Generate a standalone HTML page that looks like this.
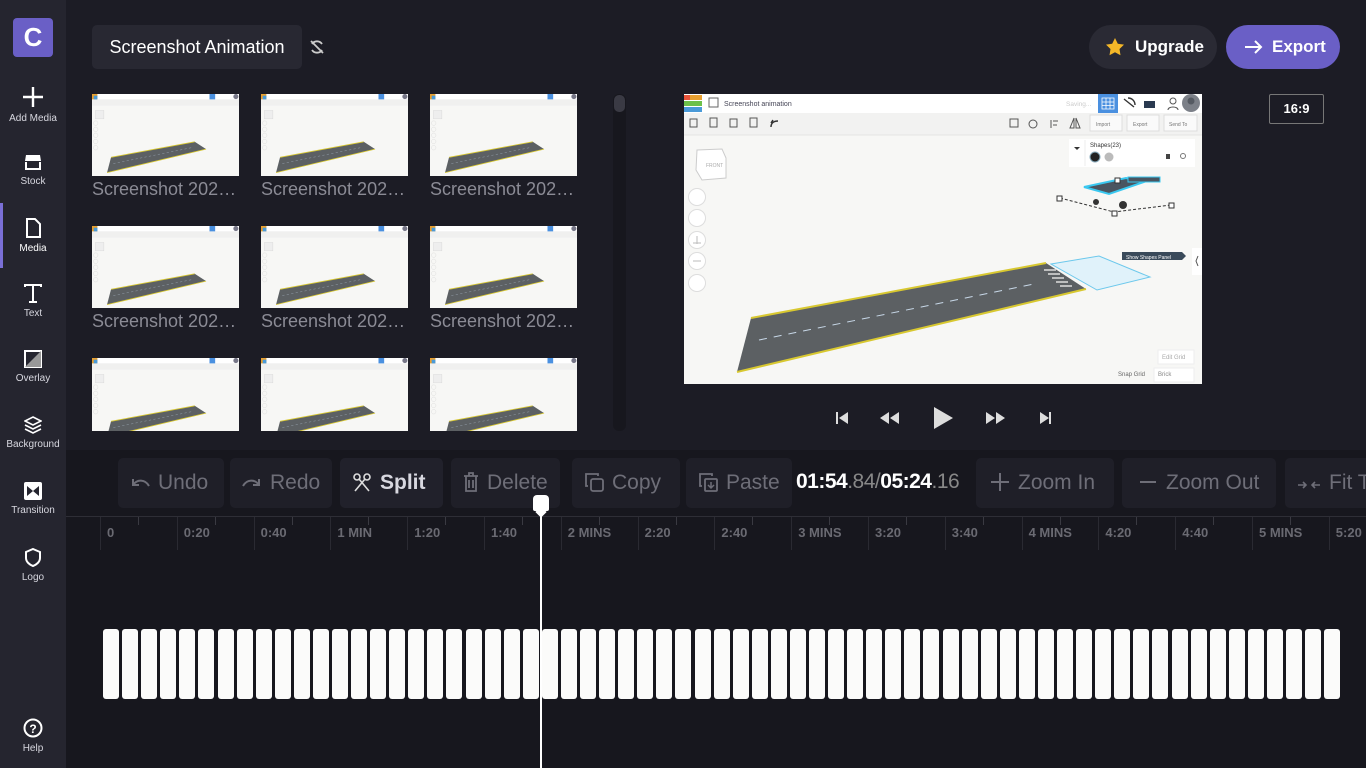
<!DOCTYPE html>
<html><head><meta charset="utf-8">
<style>
*{margin:0;padding:0;box-sizing:border-box}
body{width:1366px;height:768px;overflow:hidden;background:#1c1c25;font-family:"Liberation Sans",sans-serif;position:relative;color:#fff}
.abs{position:absolute}
#side{left:0;top:0;width:66px;height:768px;background:#25252f}
.nav{position:absolute;left:0;width:66px;text-align:center;font-size:10px;color:#d8d8e0}
.nav svg{display:block;margin:0 auto 5px}
.thumb{position:absolute;width:147px;height:82px;background:#f6f6f4;overflow:hidden}
.lbl{position:absolute;font-size:18px;color:#8b8b95;white-space:nowrap;width:147px;overflow:hidden;text-overflow:ellipsis}
.btn{position:absolute;top:458px;height:50px;background:#1f1f28;border-radius:5px;color:#6e6e78;font-size:21px;line-height:50px;padding-left:12px;white-space:nowrap;overflow:hidden}
.btn svg{vertical-align:-3px;margin-right:8px}
.tick{position:absolute;top:517px;font-size:13px;font-weight:bold;color:#6a6a72}
.clip{position:absolute;top:629px;width:16px;height:70px;background:#fbfbfa;border-radius:3px}
</style></head><body>
<div id="side" class="abs">
 <div class="abs" style="left:13px;top:18px;width:40px;height:39px;background:#6a5fc6;border-radius:4px;color:#fff;font-weight:bold;font-size:26px;text-align:center;line-height:39px">C</div>
 <div class="nav" style="top:86px"><svg width="22" height="22"><path d="M11 1v20M1 11h20" stroke="#fff" stroke-width="2.4"/></svg>Add Media</div>
 <div class="nav" style="top:153px"><svg width="18" height="18"><path d="M2 2h14l1 6H1z" fill="#fff"/><path d="M2 9v7h14V9" fill="none" stroke="#fff" stroke-width="2"/></svg>Stock</div>
 <div class="abs" style="left:0;top:203px;width:3px;height:65px;background:#7a6fd6"></div>
 <div class="nav" style="top:218px;color:#fff"><svg width="16" height="20"><path d="M2 1h8l5 5v13H2z" fill="none" stroke="#fff" stroke-width="2"/></svg>Media</div>
 <div class="nav" style="top:284px"><svg width="18" height="19"><path d="M1 3V1h16v2M9 1v17M5 18h8" fill="none" stroke="#fff" stroke-width="2"/></svg>Text</div>
 <div class="nav" style="top:350px"><svg width="18" height="18"><rect x="1" y="1" width="16" height="16" fill="none" stroke="#fff" stroke-width="2"/><path d="M17 1L1 17h16z" fill="#999"/></svg>Overlay</div>
 <div class="nav" style="top:416px"><svg width="18" height="18"><path d="M9 1l8 4-8 4-8-4zM1 9l8 4 8-4M1 13l8 4 8-4" fill="none" stroke="#fff" stroke-width="1.6"/></svg>Background</div>
 <div class="nav" style="top:482px"><svg width="18" height="18"><rect width="18" height="18" rx="2" fill="#fff"/><path d="M3 4l6 5-6 5zM15 4l-6 5 6 5z" fill="#25252f"/></svg>Transition</div>
 <div class="nav" style="top:548px"><svg width="16" height="19"><path d="M8 1l7 3v6c0 4-4 7-7 8-3-1-7-4-7-8V4z" fill="none" stroke="#fff" stroke-width="2"/></svg>Logo</div>
 <div class="nav" style="top:718px"><svg width="20" height="20"><circle cx="10" cy="10" r="8.5" fill="none" stroke="#fff" stroke-width="2"/><text x="10" y="15" font-size="12" font-weight="bold" text-anchor="middle" fill="#fff" font-family="Liberation Sans">?</text></svg>Help</div>
</div>

<div class="abs" style="left:92px;top:25px;width:210px;height:44px;background:#282832;border-radius:5px;font-size:18px;line-height:44px;text-align:center;color:#fff">Screenshot Animation</div>
<svg class="abs" style="left:309px;top:39px" width="16" height="16"><path d="M3 5a6 6 0 0 1 10 0M13 11a6 6 0 0 1-10 0M2 2l12 12" stroke="#ccc" stroke-width="1.8" fill="none"/></svg>

<div class="abs" style="left:1089px;top:25px;width:128px;height:44px;background:#2a2a34;border-radius:22px;font-size:17px;font-weight:bold;line-height:44px;padding-left:46px">Upgrade</div>
<svg class="abs" style="left:1105px;top:37px" width="20" height="19"><path d="M10 1l2.8 5.7 6.2.9-4.5 4.4 1 6.2L10 15.3 4.5 18.2l1-6.2L1 7.6l6.2-.9z" fill="#f4b728"/></svg>
<div class="abs" style="left:1226px;top:25px;width:114px;height:44px;background:#6a5fc6;border-radius:22px;font-size:17px;font-weight:bold;line-height:44px;padding-left:46px">Export</div>
<svg class="abs" style="left:1244px;top:40px" width="20" height="14"><path d="M1 7h16M11 1l6 6-6 6" stroke="#fff" stroke-width="2" fill="none"/></svg>
<div class="abs" style="left:1269px;top:94px;width:55px;height:30px;border:1px solid #777;border-radius:2px;font-size:13px;line-height:28px;text-align:center;font-weight:bold">16:9</div>

<svg width="0" height="0" style="position:absolute">
<defs>
<symbol id="shot" viewBox="0 0 518 290" preserveAspectRatio="none">
 <rect width="518" height="290" fill="#f7f7f5"/>
 <rect width="518" height="19" fill="#fff"/>
 <rect y="19" width="518" height="22" fill="#f0f0ef"/>
 <rect x="0" y="0" width="19" height="19" fill="#e8a030"/><rect x="6" y="6" width="13" height="13" fill="#4a9ad8"/>
 <rect x="414" y="0" width="20" height="19" fill="#4a90e0"/>
 <circle cx="507" cy="9" r="9" fill="#778"/>
 <rect x="12" y="58" width="30" height="30" fill="#eee" stroke="#ccc"/>
 <circle cx="13" cy="103" r="8" fill="none" stroke="#ccc"/><circle cx="13" cy="125" r="8" fill="none" stroke="#ccc"/><circle cx="13" cy="146" r="8" fill="none" stroke="#ccc"/><circle cx="13" cy="168" r="8" fill="none" stroke="#ccc"/><circle cx="13" cy="190" r="8" fill="none" stroke="#ccc"/>
 <polygon points="67,224 362,169 402,195 53,278" fill="#5c6063"/>
 <path d="M67,224 L362,169 M53,278 L402,195" stroke="#d8c830" stroke-width="3"/>
 <path d="M75,246 L350,190" stroke="#bcd" stroke-width="1" stroke-dasharray="8,8"/>
</symbol>
</defs></svg>

<div id="media"></div>
<div class="abs" style="left:613px;top:94px;width:13px;height:337px;background:#17171e;border-radius:6px"></div>
<div class="abs" style="left:614px;top:95px;width:11px;height:17px;background:#3a3a44;border-radius:5px"></div>

<svg class="abs" style="left:684px;top:94px" width="518" height="290" viewBox="0 0 518 290">
 <rect width="518" height="290" fill="#f7f7f5"/>
 <rect width="518" height="19" fill="#fff"/>
 <rect y="19" width="518" height="22" fill="#f2f2f1"/>
 <line x1="0" y1="41" x2="518" y2="41" stroke="#e4e4e4"/>
 <rect x="0" y="1" width="6" height="5" fill="#e8543a"/><rect x="6" y="1" width="6" height="5" fill="#e8a030"/><rect x="12" y="1" width="6" height="5" fill="#e8a030"/>
 <rect x="0" y="7" width="6" height="5" fill="#6cc04a"/><rect x="6" y="7" width="6" height="5" fill="#6cc04a"/><rect x="12" y="7" width="6" height="5" fill="#6cc04a"/>
 <rect x="0" y="13" width="6" height="5" fill="#4a9ad8"/><rect x="6" y="13" width="6" height="5" fill="#4a9ad8"/><rect x="12" y="13" width="6" height="5" fill="#4a9ad8"/>
 <rect x="25" y="4" width="9" height="9" fill="none" stroke="#666"/>
 <text x="40" y="12" font-size="7" fill="#445" font-family="Liberation Sans">Screenshot animation</text>
 <text x="382" y="12" font-size="6.5" fill="#ccc" font-family="Liberation Sans">Saving...</text>
 <rect x="414" y="0" width="20" height="19" fill="#4a90e0"/>
 <path d="M418 4h12v11h-12zM418 8h12M418 11.5h12M422 4v11M426 4v11" stroke="#fff" stroke-width=".8" fill="none"/>
 <path d="M440 5l10 8M444 4c4 0 7 3 7 7" stroke="#333" stroke-width="1.4" fill="none"/>
 <rect x="460" y="7" width="11" height="7" fill="#2a3a50"/>
 <circle cx="489" cy="7" r="3" fill="none" stroke="#555"/><path d="M484 16c0-4 10-4 10 0" stroke="#555" fill="none"/>
 <circle cx="507" cy="9" r="9" fill="#7c8088"/><circle cx="507" cy="7" r="3.5" fill="#555a62"/>
 <g fill="none" stroke="#555" stroke-width="1"><rect x="6" y="25" width="7" height="8"/><rect x="26" y="24" width="7" height="9"/><rect x="46" y="25" width="7" height="8"/><rect x="66" y="24" width="7" height="9"/></g>
 <path d="M87 33c0-4 3-6 7-6M87 29l2-3" stroke="#333" stroke-width="1.5" fill="none"/>
 <g fill="none" stroke="#555"><rect x="326" y="25" width="8" height="8"/><circle cx="349" cy="30" r="4"/><path d="M367 26v8M369 27h5M369 31h4"/><path d="M390 24l-4 10h4zM392 24l4 10h-4z"/></g>
 <g fill="#fafafa" stroke="#ddd"><rect x="406" y="21" width="32" height="16"/><rect x="443" y="21" width="32" height="16"/><rect x="480" y="21" width="33" height="16"/></g>
 <text x="412" y="32" font-size="5" fill="#777" font-family="Liberation Sans">Import</text><text x="449" y="32" font-size="5" fill="#777" font-family="Liberation Sans">Export</text><text x="485" y="32" font-size="5" fill="#777" font-family="Liberation Sans">Send To</text>
 <polygon points="13,56 38,55 42,64 42,84 18,86 12,76" fill="#fff" stroke="#ccc"/>
 <text x="22" y="73" font-size="5" fill="#aaa" font-family="Liberation Sans">FRONT</text>
 <g fill="#fff" stroke="#ddd"><circle cx="13" cy="103" r="8.5"/><circle cx="13" cy="124" r="8.5"/><circle cx="13" cy="146" r="8.5"/><circle cx="13" cy="167" r="8.5"/><circle cx="13" cy="189" r="8.5"/></g>
 <g stroke="#bbb" fill="none"><path d="M9 149h8M13 142v8"/><path d="M9 167h8"/></g>
 <rect x="385" y="45" width="126" height="28" fill="#fff"/>
 <line x1="401" y1="46" x2="401" y2="72" stroke="#eee"/>
 <path d="M390 53h6l-3 3z" fill="#333"/>
 <text x="406" y="53" font-size="6" fill="#333" font-family="Liberation Sans">Shapes(23)</text>
 <circle cx="411" cy="63" r="5" fill="#222" stroke="#8ab"/><circle cx="425" cy="63" r="4.5" fill="#bbb"/>
 <rect x="482" y="60" width="4" height="5" fill="#444"/><circle cx="499" cy="62" r="2.5" fill="none" stroke="#777"/>
 <polygon points="400,93 442,84 460,88 425,100" fill="#4a5560" stroke="#3ac8f0" stroke-width="2"/>
 <rect x="444" y="83" width="32" height="5" fill="#4a5560" stroke="#3ac8f0"/>
 <circle cx="412" cy="108" r="3" fill="#333"/><circle cx="439" cy="111" r="4" fill="#333"/>
 <path d="M376,104 L430,118 L487,111" stroke="#333" stroke-dasharray="3,2" fill="none"/>
 <g fill="#fff" stroke="#333"><rect x="373" y="102" width="5" height="5"/><rect x="485" y="109" width="5" height="5"/><rect x="428" y="117" width="5" height="5"/><rect x="431" y="84" width="5" height="5"/></g>
 <polygon points="367,170 415,162 466,183 413,196" fill="#e0f2fa" stroke="#6cc8ec"/>
 <polygon points="67,224 362,169 402,195 53,278" fill="#5c6063"/>
 <path d="M67,224 L362,169 M53,278 L402,195" stroke="#d8c830" stroke-width="2"/>
 <path d="M75,246 L350,190" stroke="#c8d8e8" stroke-width="1" stroke-dasharray="8,7"/>
 <g stroke="#ddd" stroke-width="1.5"><path d="M360,176h12M364,180h12M368,184h12M372,188h12M376,192h12"/></g>
 <path d="M438,158h60l4,4-4,4h-60z" fill="#3a4a5a"/>
 <text x="442" y="165" font-size="5" fill="#fff" font-family="Liberation Sans">Show Shapes Panel</text>
 <rect x="508" y="154" width="10" height="27" fill="#fff"/><path d="M514 162l-2 5 2 5" stroke="#555" fill="none"/>
 <rect x="474" y="256" width="36" height="14" fill="#fff" stroke="#eee"/>
 <text x="478" y="265" font-size="6" fill="#aaa" font-family="Liberation Sans">Edit Grid</text>
 <text x="434" y="282" font-size="6" fill="#666" font-family="Liberation Sans">Snap Grid</text>
 <rect x="470" y="274" width="40" height="14" fill="#fff" stroke="#eee"/>
 <text x="474" y="282" font-size="6" fill="#888" font-family="Liberation Sans">Brick</text>
</svg>

<svg class="abs" style="left:830px;top:404px" width="230" height="30">
 <rect x="6" y="8" width="2" height="12" fill="#ddd"/><path d="M18 8v12l-9-6z" fill="#ddd"/>
 <path d="M59 8v12l-9-6zM69 8v12l-9-6z" fill="#ddd"/>
 <path d="M104 3v22l19-11z" fill="#ddd"/>
 <path d="M156 8v12l9-6zM166 8v12l9-6z" fill="#ddd"/>
 <path d="M210 8v12l9-6z" fill="#ddd"/><rect x="219" y="8" width="2" height="12" fill="#ddd"/>
</svg>

<div class="abs" style="left:66px;top:450px;width:1300px;height:318px;background:#17171e"></div>
<div class="btn" style="left:118px;width:106px"><svg width="20" height="16"><path d="M3 9c4-6 12-6 16 1M3 3v6h6" stroke="#6e6e78" stroke-width="2" fill="none"/></svg>Undo</div>
<div class="btn" style="left:230px;width:102px"><svg width="20" height="16"><path d="M17 9C13 3 5 3 1 10M17 3v6h-6" stroke="#6e6e78" stroke-width="2" fill="none"/></svg>Redo</div>
<div class="btn" style="left:340px;width:103px;color:#d8d8e0;background:#21212b;font-weight:bold"><svg width="20" height="20"><circle cx="5" cy="5" r="3" stroke="#ddd" stroke-width="1.6" fill="none"/><circle cx="15" cy="5" r="3" stroke="#ddd" stroke-width="1.6" fill="none"/><path d="M7 7l10 12M13 7L3 19" stroke="#ddd" stroke-width="1.6"/></svg>Split</div>
<div class="btn" style="left:451px;width:109px"><svg width="16" height="20"><path d="M1 4h14M6 4V1h4v3M3 4v15h10V4M6 8v8M10 8v8" stroke="#6e6e78" stroke-width="1.8" fill="none"/></svg>Delete</div>
<div class="btn" style="left:572px;width:108px"><svg width="20" height="20"><path d="M4 14H2V2h12v2" stroke="#6e6e78" stroke-width="1.8" fill="none"/><rect x="7" y="7" width="12" height="12" rx="2" stroke="#6e6e78" stroke-width="1.8" fill="none"/></svg>Copy</div>
<div class="btn" style="left:686px;width:106px"><svg width="20" height="20"><path d="M4 14H2V2h12v2" stroke="#6e6e78" stroke-width="1.8" fill="none"/><rect x="7" y="7" width="12" height="12" rx="1" stroke="#6e6e78" stroke-width="1.8" fill="none"/><path d="M13 10v6M10 13l3 3 3-3" stroke="#6e6e78" stroke-width="1.5" fill="none"/></svg>Paste</div>
<div class="abs" style="left:796px;top:470px;font-size:21px;font-weight:bold;color:#fff;white-space:nowrap;letter-spacing:-0.5px">01:54<span style="color:#888;font-weight:normal">.84</span><span style="color:#888;font-weight:normal">/</span>05:24<span style="color:#888;font-weight:normal">.16</span></div>
<div class="btn" style="left:976px;width:138px;padding-left:14px"><svg width="20" height="20"><path d="M10 1v18M1 10h18" stroke="#6e6e78" stroke-width="2"/></svg>Zoom In</div>
<div class="btn" style="left:1122px;width:154px;padding-left:16px"><svg width="20" height="20"><path d="M2 10h16" stroke="#6e6e78" stroke-width="2"/></svg>Zoom Out</div>
<div class="btn" style="left:1285px;width:100px"><svg width="24" height="14"><path d="M1 7h8M6 4l3 3-3 3M23 7h-8M18 4l-3 3 3 3" stroke="#6e6e78" stroke-width="1.6" fill="none"/></svg>Fit T</div>
<div class="abs" style="left:66px;top:516px;width:1300px;height:1px;background:#2e2e36"></div>
<div id="tl"></div>
<div class="abs" style="left:540px;top:505px;width:2px;height:263px;background:#fff"></div>
<div class="abs" style="left:533px;top:495px;width:16px;height:16px;background:#fff;border-radius:4px 4px 2px 2px"></div>
<div class="abs" style="left:537px;top:508px;width:8px;height:8px;background:#fff;transform:rotate(45deg)"></div>
<script>
var m=document.getElementById('media'),h='';
var xs=[92,261,430],ys=[94,226,358];
for(var r=0;r<3;r++)for(var c=0;c<3;c++){
 var t=ys[r]+82>431?431-ys[r]:82;
 h+='<div class="thumb" style="left:'+xs[c]+'px;top:'+ys[r]+'px;height:'+t+'px"><svg width="147" height="82"><use href="#shot" width="147" height="82"/></svg></div>';
 if(r<2)h+='<div class="lbl" style="left:'+xs[c]+'px;top:'+(ys[r]+85)+'px">Screenshot 2023-01-01</div>';
}
m.innerHTML=h;
var tl=document.getElementById('tl'),s='';
var labels=['0','0:20','0:40','1 MIN','1:20','1:40','2 MINS','2:20','2:40','3 MINS','3:20','3:40','4 MINS','4:20','4:40','5 MINS','5:20'];
for(var i=0;i<labels.length;i++){var x=100+i*76.8;
 s+='<div class="abs" style="left:'+x+'px;top:517px;width:1px;height:33px;background:#2a2a32"></div>';
 s+='<div class="abs" style="left:'+(x+38)+'px;top:517px;width:1px;height:8px;background:#3a3a42"></div>';
 s+='<div class="tick" style="left:'+(x+7)+'px;top:525px">'+labels[i]+'</div>';}
for(var k=0;k<65;k++){s+='<div class="clip" style="left:'+(103+k*19.08).toFixed(1)+'px"></div>';}
tl.innerHTML=s;
</script>
</body></html>
